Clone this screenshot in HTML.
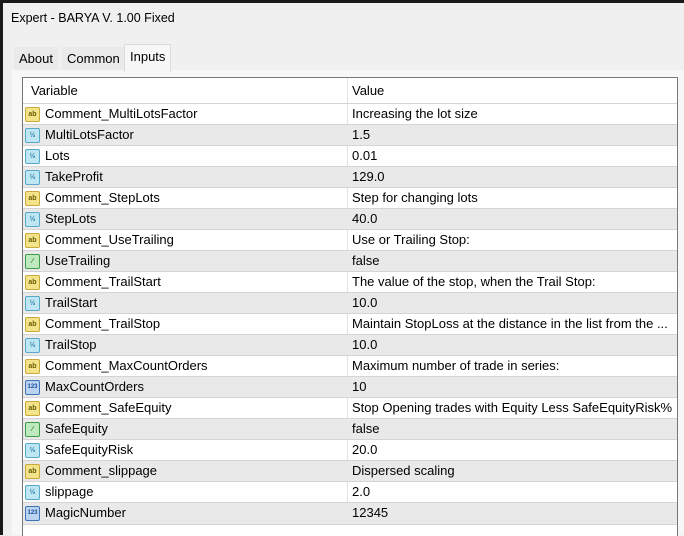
<!DOCTYPE html><html><head><style>
body{margin:0;width:684px;height:535px;background:#f0f0f0;font-family:"Liberation Sans",sans-serif;font-size:13px;color:#000;position:relative;overflow:hidden}
.edge{position:absolute;left:0;top:0;width:3px;height:535px;background:#1a1a1a}
.topb{position:absolute;left:0;top:0;width:684px;height:3px;background:#1a1a1a}
.win{position:absolute;left:3px;top:3px;width:681px;height:532px;background:#f0f0f0;border-top-left-radius:6px}
.title{position:absolute;left:11px;top:11px;font-size:12.5px}
.tabs{position:absolute;top:44px;left:12px;height:26px}
.tab{position:absolute;top:3px;height:23px;background:#eaeaea;line-height:23px;padding:0 5px;font-size:13px}
.tab.sel{top:0;height:27px;background:#f7f7f7;line-height:24px;border:1px solid #dcdcdc;border-bottom:none}
.panel{position:absolute;left:12px;top:70px;width:672px;height:465px;background:#f7f7f7}
.grid{position:absolute;left:22px;top:77px;width:654px;height:458px;background:#fff;border:1px solid #777;border-bottom:none}
.hdr{position:absolute;top:0;left:0;width:100%;height:24px;line-height:25px}
.row{position:absolute;left:0;width:100%;height:21px;line-height:20px;border-top:1px solid #d5d5d5}
.row.g{background:#e9e9e9}
.c1{position:absolute;left:22px}.c2{position:absolute;left:329px}
.vl{position:absolute;left:324px;top:0;width:1px;height:446px;background:#e2e2e2}
.ic{position:absolute;left:2px;top:3px;width:13px;height:13px;border-radius:2px;font-size:7px;line-height:13px;text-align:center;font-weight:bold}
.ab{background:#f3e38a;border:1px solid #c9a93a;color:#6a5a00}
.fr{background:#bfe7f3;border:1px solid #58a8c8;color:#2a7aa0}
.n{background:#b9d3f0;border:1px solid #3d74b8;color:#1d4f9a;font-size:6px}
.b{background:#bfeac0;border:1px solid #3e9e48;color:#2a7a30}
</style></head><body>
<div class="win"></div>
<div class="edge"></div><div class="topb"></div>
<div class="title">Expert - BARYA V. 1.00 Fixed</div>
<div class="panel"></div>
<div class="tabs">
<div class="tab" style="left:2px">About</div>
<div class="tab" style="left:50px">Common</div>
<div class="tab sel" style="left:112px">Inputs</div>
</div>
<div class="grid">
<div class="vl"></div>
<div class="hdr"><span class="c1" style="left:8px">Variable</span><span class="c2">Value</span></div>
<div class="row" style="top:25px"><span class="ic ab">ab</span><span class="c1">Comment_MultiLotsFactor</span><span class="c2">Increasing the lot size</span></div>
<div class="row g" style="top:46px"><span class="ic fr">½</span><span class="c1">MultiLotsFactor</span><span class="c2">1.5</span></div>
<div class="row" style="top:67px"><span class="ic fr">½</span><span class="c1">Lots</span><span class="c2">0.01</span></div>
<div class="row g" style="top:88px"><span class="ic fr">½</span><span class="c1">TakeProfit</span><span class="c2">129.0</span></div>
<div class="row" style="top:109px"><span class="ic ab">ab</span><span class="c1">Comment_StepLots</span><span class="c2">Step for changing lots</span></div>
<div class="row g" style="top:130px"><span class="ic fr">½</span><span class="c1">StepLots</span><span class="c2">40.0</span></div>
<div class="row" style="top:151px"><span class="ic ab">ab</span><span class="c1">Comment_UseTrailing</span><span class="c2">Use or Trailing Stop:</span></div>
<div class="row g" style="top:172px"><span class="ic b">⁄</span><span class="c1">UseTrailing</span><span class="c2">false</span></div>
<div class="row" style="top:193px"><span class="ic ab">ab</span><span class="c1">Comment_TrailStart</span><span class="c2">The value of the stop, when the Trail Stop:</span></div>
<div class="row g" style="top:214px"><span class="ic fr">½</span><span class="c1">TrailStart</span><span class="c2">10.0</span></div>
<div class="row" style="top:235px"><span class="ic ab">ab</span><span class="c1">Comment_TrailStop</span><span class="c2">Maintain StopLoss at the distance in the list from the ...</span></div>
<div class="row g" style="top:256px"><span class="ic fr">½</span><span class="c1">TrailStop</span><span class="c2">10.0</span></div>
<div class="row" style="top:277px"><span class="ic ab">ab</span><span class="c1">Comment_MaxCountOrders</span><span class="c2">Maximum number of trade in series:</span></div>
<div class="row g" style="top:298px"><span class="ic n">123</span><span class="c1">MaxCountOrders</span><span class="c2">10</span></div>
<div class="row" style="top:319px"><span class="ic ab">ab</span><span class="c1">Comment_SafeEquity</span><span class="c2">Stop Opening trades with Equity Less SafeEquityRisk%</span></div>
<div class="row g" style="top:340px"><span class="ic b">⁄</span><span class="c1">SafeEquity</span><span class="c2">false</span></div>
<div class="row" style="top:361px"><span class="ic fr">½</span><span class="c1">SafeEquityRisk</span><span class="c2">20.0</span></div>
<div class="row g" style="top:382px"><span class="ic ab">ab</span><span class="c1">Comment_slippage</span><span class="c2">Dispersed scaling</span></div>
<div class="row" style="top:403px"><span class="ic fr">½</span><span class="c1">slippage</span><span class="c2">2.0</span></div>
<div class="row g" style="top:424px;border-bottom:1px solid #d5d5d5"><span class="ic n">123</span><span class="c1">MagicNumber</span><span class="c2">12345</span></div>
</div>
</body></html>
